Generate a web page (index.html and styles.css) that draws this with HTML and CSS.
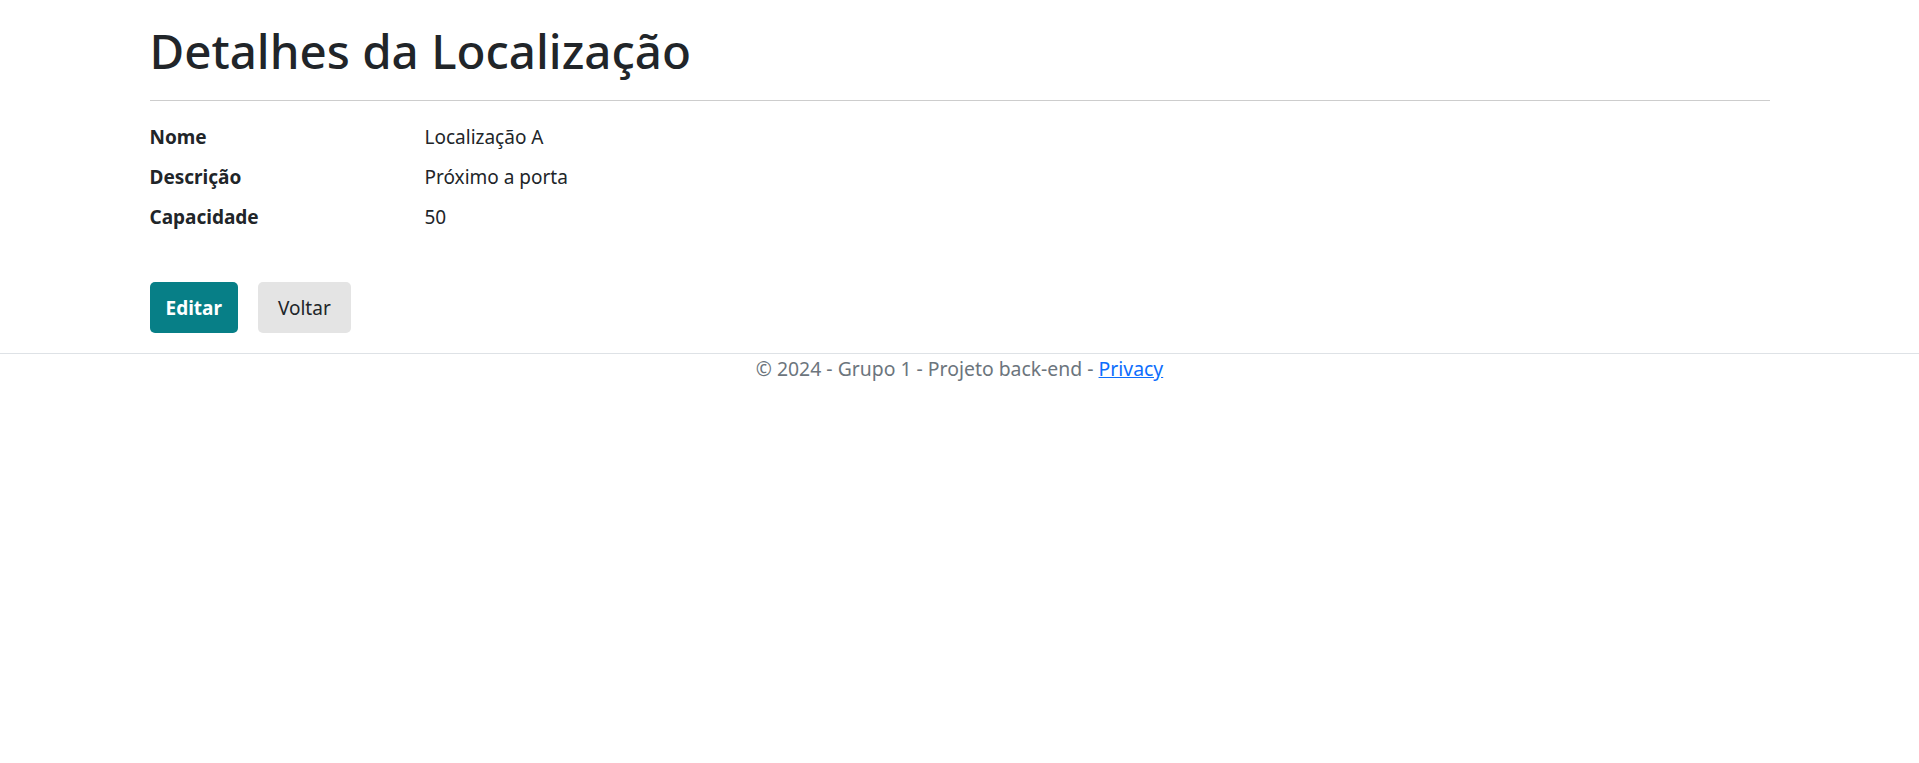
FILE: index.html
```html
<!DOCTYPE html>
<html lang="pt">
<head>
<meta charset="utf-8">
<title>Detalhes da Localização</title>
<link rel="stylesheet" href="styles.css">
</head>
<body>
<main class="container">
  <h1 class="title">Detalhes da Localização</h1>
  <hr class="divider">
  <dl class="details">
    <dt>Nome</dt>
    <dd>Localização A</dd>
    <dt>Descrição</dt>
    <dd>Próximo a porta</dd>
    <dt>Capacidade</dt>
    <dd>50</dd>
  </dl>
  <div class="actions">
    <a class="btn btn-primary" href="#">Editar</a>
    <a class="btn btn-secondary" href="#">Voltar</a>
  </div>
</main>
<footer class="footer">
  &copy; 2024 - Grupo 1 - Projeto back-end - <a class="footer-link" href="#">Privacy</a>
</footer>
</body>
</html>
```
FILE: styles.css
```css
html, body {
  margin: 0;
  padding: 0;
}
body {
  font-family: "Noto Sans", "Open Sans", sans-serif;
  font-size: 19px;
  line-height: 30px;
  color: #212529;
  background: #ffffff;
}
.container {
  width: 1620px;
  margin: 0 auto;
}
.title {
  margin: 0;
  padding-top: 21px;
  font-size: 47.5px;
  line-height: 60px;
  font-weight: 500;
  color: #212529;
}
.divider {
  margin: 19px 0 0 0;
  border: 0;
  border-top: 1px solid #cdcdcd;
  height: 0;
}
.details {
  margin: 21px 0 0 0;
  display: grid;
  grid-template-columns: 275px 1fr;
}
.details dt {
  font-weight: 700;
  margin: 0 0 10px 0;
}
.details dd {
  margin: 0 0 10px 0;
}
.actions {
  display: flex;
  gap: 20px;
  margin-top: 40px;
}
.btn {
  display: inline-flex;
  align-items: center;
  justify-content: center;
  height: 51px;
  border-radius: 5px;
  text-decoration: none;
  box-sizing: border-box;
}
.btn-primary {
  padding: 0 16px;
  background: #077f87;
  color: #ffffff;
  font-weight: 700;
}
.btn-secondary {
  padding: 0 20px;
  background: #e4e4e4;
  color: #212529;
}
.footer {
  margin-top: 20px;
  border-top: 1px solid #dee2e6;
  text-align: center;
  color: #6c757d;
  font-size: 19.4px;
  line-height: 30px;
}
.footer-link {
  color: #0d6efd;
  text-decoration: underline;
}
```
